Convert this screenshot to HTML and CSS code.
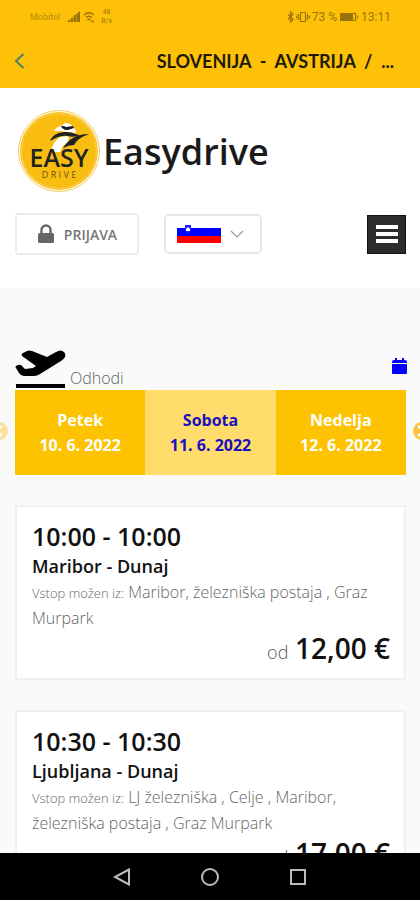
FILE: index.html
```
<!DOCTYPE html>
<html lang="sl">
<head>
<meta charset="utf-8">
<meta name="viewport" content="width=device-width, initial-scale=1">
<title>Easydrive</title>
<link rel="stylesheet" href="styles.css">
</head>
<body>
<header class="appbar">
  <div class="status">
    <span class="carrier">Mobitel</span>
    <svg width="12" height="12" viewBox="0 0 12 12"><path d="M0 11V10L12 0v11z" fill="currentColor" opacity=".55"/><path d="M0 11h2V9H0zM3 11h2V7H3zM6 11h2V4H6zM9 11h3V0L9 3z" fill="currentColor"/></svg>
    <svg width="12" height="12" viewBox="0 0 12 12" fill="none" stroke="currentColor" stroke-width="1.4"><path d="M1 4q5-4.500 10 0M3 6.500q3-2.500 6 0M4.500 9q1.500-1.500 3 0M8 10.500h3"/></svg>
    <span class="speed"><span>48</span><span>B/s</span></span>
    <span class="status-right">
      <svg width="7" height="12" viewBox="0 0 7 12" fill="none" stroke="currentColor" stroke-width="1.200"><path d="M1 3.500l5 5L3.500 11V1L6 3.500l-5 5"/></svg>
      <svg width="14" height="12" viewBox="0 0 14 12" fill="none" stroke="currentColor" stroke-width="1.200"><path d="M4.500 1.500h5v9h-5zM2.500 3v6M11.500 3v6M.6 4.500v3M13.400 4.500v3"/></svg>
      <span>73 %</span>
      <svg width="20" height="10" viewBox="0 0 20 10"><path d="M1 1h13v8H1z" fill="currentColor"/><path d="M14 1.500h2.500v7H14M18.500 3.500v3" fill="none" stroke="currentColor" stroke-width="1.200"/></svg>
      <span>13:11</span>
    </span>
  </div>
  <div class="titlebar">
    <button class="back" type="button" aria-label="Nazaj"><svg width="12" height="18" viewBox="0 0 12 18" fill="none" stroke="currentColor" stroke-width="2"><path d="M10.500 2L3 9l7.500 7"/></svg></button>
    <h1 class="apptitle">SLOVENIJA&nbsp; -&nbsp; AVSTRIJA&nbsp; /&nbsp; ...</h1>
  </div>
</header>
<main class="page">
  <section class="masthead">
    <a class="brand" href="#">
      <svg class="logo" viewBox="0 0 86 86">
        <circle cx="44" cy="42" r="40.500" fill="#fff" stroke="#f8cb58" stroke-width="1"/>
        <circle cx="44" cy="42" r="39" fill="#f9bd12"/>
        <circle cx="44" cy="42" r="37.500" fill="none" stroke="#fbd673" stroke-width=".8"/>
        <path d="M36 43q2-11 9-15l9-1-1 6-5 4-3 6z" fill="#fff"/>
        <path d="M39 22q2-4 7-5l4-3q6 0 8 4 3 2 3 6l-8-1-7-1z" fill="#fff"/>
        <path d="M46 17l3 0 2 1 7-1 1 2-6 2-3 0-3-2z" fill="#222"/>
        <path d="M35 32c3-7 9-9 17-9 6 0 9 3 13 3-4 2-9 2-13 1-6-1-11 2-17 5z" fill="#222"/>
        <path d="M48 39c6-9 13-14 26-14-8 3-12 6-15 11q-5 0-11 3z" fill="#222"/>
        <text x="44" y="58" class="logo-easy" text-anchor="middle">EASY</text>
        <text x="44" y="69" class="logo-drive" text-anchor="middle">D R I V E</text>
      </svg>
      <span class="brand-name">Easydrive</span>
    </a>
    <div class="tools">
      <button class="login" type="button">
        <svg width="18" height="20" viewBox="0 0 18 20"><path d="M4.500 10V6a4.500 4.500 0 0 1 9 0v4" fill="none" stroke="currentColor" stroke-width="2.400"/><rect x="1" y="9" width="16" height="10" rx="1.500" fill="currentColor"/></svg>
        <span>PRIJAVA</span>
      </button>
      <div class="language">
        <svg width="44" height="20" viewBox="0 0 44 20"><path d="M0 4h44v8H0z" fill="#00f"/><path d="M0 12h44v7H0z" fill="#f00"/><path d="M8 1h6v4q0 3-3 4-3-1-3-4z" fill="#22f"/><path d="M9 7V5l2-2 2 2v2z" fill="#fff"/></svg>
        <svg width="14" height="9" viewBox="0 0 14 9" fill="none" stroke="#999" stroke-width="1.200"><path d="M1 1l6 6 6-6"/></svg>
        <select class="language-select" aria-label="Jezik"><option>Slovenščina</option><option>English</option></select>
      </div>
      <button class="menu" type="button" aria-label="Meni"><svg width="22" height="20" viewBox="0 0 22 20" fill="#fff"><path d="M0 1h22v4H0zM0 8h22v4H0zM0 15h22v4H0z"/></svg></button>
    </div>
  </section>
  <section class="departures">
    <div class="section-head">
      <svg width="51" height="40" viewBox="0 0 51 40"><path d="M1 34h49v4H1z"/><path d="M1 16q3-2 5-1l4 4 8-1 3-2L7 6q-1-2 1-3l4-2q2-1 5 0l15 6 9-5q5-3 8 0 2 2 1 5-1 2-4 4L25 24q-3 2-6 2H9q-3 0-5-3L1 18q-1-1 0-2z"/></svg>
      <h2 class="section-title">Odhodi</h2>
      <button class="calendar" type="button" aria-label="Koledar"><svg width="15" height="17" viewBox="0 0 15 17" fill="currentColor"><path d="M0 5V4q0-2 2-2h1V0h2v2h5V0h2v2h1q2 0 2 2v1zM0 6h15v9q0 1-1 1H1q-1 0-1-1z"/></svg></button>
    </div>
    <div class="carousel">
      <button class="arrow arrow-prev" type="button" aria-label="Prejšnji dnevi"><svg width="18" height="18" viewBox="0 0 18 18"><circle cx="9" cy="9" r="9" fill="#fdb913"/><path d="M12 4L7 9l5 5" fill="none" stroke="#fff" stroke-width="2"/></svg></button>
      <button class="day" type="button"><span>Petek</span><span>10. 6. 2022</span></button>
      <button class="day day-current" type="button"><span>Sobota</span><span>11. 6. 2022</span></button>
      <button class="day" type="button"><span>Nedelja</span><span>12. 6. 2022</span></button>
      <button class="arrow arrow-next" type="button" aria-label="Naslednji dnevi"><svg width="18" height="18" viewBox="0 0 18 18"><circle cx="9" cy="9" r="9" fill="#fdb913"/><path d="M5 4l5 5-5 5" fill="none" stroke="#fff" stroke-width="2"/></svg></button>
    </div>
    <article class="trip">
      <h3 class="time">10:00 - 10:00</h3>
      <h4 class="route">Maribor - Dunaj</h4>
      <p class="stops"><small>Vstop možen iz:</small> Maribor, železniška postaja , Graz Murpark</p>
      <p class="price"><span>od</span> <strong>12,00 €</strong></p>
    </article>
    <article class="trip">
      <h3 class="time">10:30 - 10:30</h3>
      <h4 class="route">Ljubljana - Dunaj</h4>
      <p class="stops"><small>Vstop možen iz:</small> LJ železniška , Celje , Maribor, železniška postaja , Graz Murpark</p>
      <p class="price"><span>od</span> <strong>17,00 €</strong></p>
    </article>
  </section>
</main>
<nav class="system">
  <button type="button" aria-label="Nazaj"><svg width="20" height="20" viewBox="0 0 20 20"><path d="M17 2.500v15L3 10z"/></svg></button>
  <button type="button" aria-label="Domov"><svg width="20" height="20" viewBox="0 0 20 20"><circle cx="10" cy="10" r="8"/></svg></button>
  <button type="button" aria-label="Nedavno"><svg width="20" height="20" viewBox="0 0 20 20"><path d="M3 3h14v14H3z"/></svg></button>
</nav>
</body>
</html>
```
FILE: styles.css
```
* { box-sizing: border-box; }
body {
  margin: 0;
  height: 100vh;
  display: flex;
  flex-direction: column;
  overflow: hidden;
  background: #fafafa;
  color: #111;
  font-family: "Open Sans", "Noto Sans", sans-serif;
}
h1, h2, h3, h4, p { margin: 0; }
button {
  margin: 0;
  padding: 0;
  border: 0;
  background: none;
  font: inherit;
  color: inherit;
}
svg { display: block; flex: none; }

.appbar { flex: none; height: 88px; background: #ffc107; }
.status {
  display: flex;
  align-items: center;
  gap: 3px;
  height: 34px;
  padding: 0 29px 0 30px;
  color: #9a7408;
  font: 12px/14px Roboto, sans-serif;
}
.carrier { margin-right: 5px; font-size: 9px; color: #b58a0a; }
.speed {
  display: flex;
  flex-direction: column;
  align-items: center;
  margin-left: 3px;
  font-size: 7px;
  line-height: 9px;
}
.status-right { display: flex; align-items: center; gap: 2px; margin-left: auto; }
.titlebar {
  display: flex;
  align-items: center;
  justify-content: space-between;
  height: 54px;
  padding: 0 26px 0 13px;
}
.back { color: #4c8068; }
.apptitle { font: 700 18px/24px Lato, sans-serif; color: #1c1a08; }

.page { flex: 1; min-height: 0; overflow: hidden; }
.masthead { padding: 21px 14px 33px 15px; background: #fff; }
.brand {
  display: flex;
  align-items: center;
  gap: 2px;
  color: #1a1a1a;
  text-decoration: none;
}
.logo { width: 86px; height: 86px; }
.logo-easy { font: 600 25px "Open Sans", sans-serif; fill: #222; }
.logo-drive { font: 9px "Open Sans", sans-serif; fill: #6b520d; }
.brand-name { font-size: 36px; line-height: 48px; font-weight: 600; }
.tools { display: flex; align-items: center; margin-top: 18px; }
.login {
  display: flex;
  align-items: center;
  justify-content: center;
  gap: 9px;
  width: 124px;
  height: 42px;
  border: 2px solid #ececec;
  border-radius: 3px;
  color: #777;
  font-size: 14px;
  font-weight: 600;
}
.login svg { color: #666; }
.language {
  position: relative;
  display: flex;
  align-items: center;
  gap: 9px;
  width: 98px;
  height: 40px;
  margin-left: 25px;
  padding-left: 11px;
  border: 2px solid #e6e6e6;
  border-radius: 5px;
}
.language-select {
  position: absolute;
  inset: 0;
  width: 100%;
  border: 0;
  opacity: 0;
}
.menu {
  display: grid;
  place-items: center;
  width: 39px;
  height: 39px;
  margin-left: auto;
  border: 1px solid #111;
  background: #2c2c2c;
}

.departures { padding: 62px 14px 0 15px; }
.section-head { display: flex; align-items: flex-end; gap: 4px; }
.section-title { font-size: 16px; line-height: 24px; font-weight: 300; color: #666; }
.calendar { align-self: center; margin: 0 -1px 8px auto; color: #00f; }
.carousel {
  position: relative;
  display: grid;
  grid-template-columns: repeat(3, 1fr);
  height: 85px;
}
.day {
  display: flex;
  flex-direction: column;
  align-items: center;
  justify-content: center;
  background: #fdc300;
  color: #fff;
  font-size: 16px;
  line-height: 25px;
  font-weight: 700;
}
.day-current { background: #ffdc6b; color: #1a0fc0; }
.arrow { position: absolute; top: 32px; }
.arrow-prev { left: -25px; opacity: .4; }
.arrow-next { right: -25px; opacity: .8; }

.trip {
  margin-top: 30px;
  padding: 13px 14px 9px 15px;
  border: 2px solid #f0f0f0;
  background: #fff;
}
.time { font-size: 25px; line-height: 32px; font-weight: 600; }
.route { font-size: 18px; line-height: 28px; font-weight: 600; }
.stops { font-size: 16px; line-height: 25px; font-weight: 300; color: #666; }
.stops small { font-size: 13px; }
.price { text-align: right; line-height: 34px; font-size: 18px; font-weight: 300; color: #555; }
.price strong { margin-left: 2px; font-size: 28px; font-weight: 600; color: #111; }

.system {
  flex: none;
  display: flex;
  align-items: center;
  justify-content: center;
  gap: 68px;
  height: 47px;
  background: #000;
}
.system svg { fill: none; stroke: #bbb; stroke-width: 2; }
```
